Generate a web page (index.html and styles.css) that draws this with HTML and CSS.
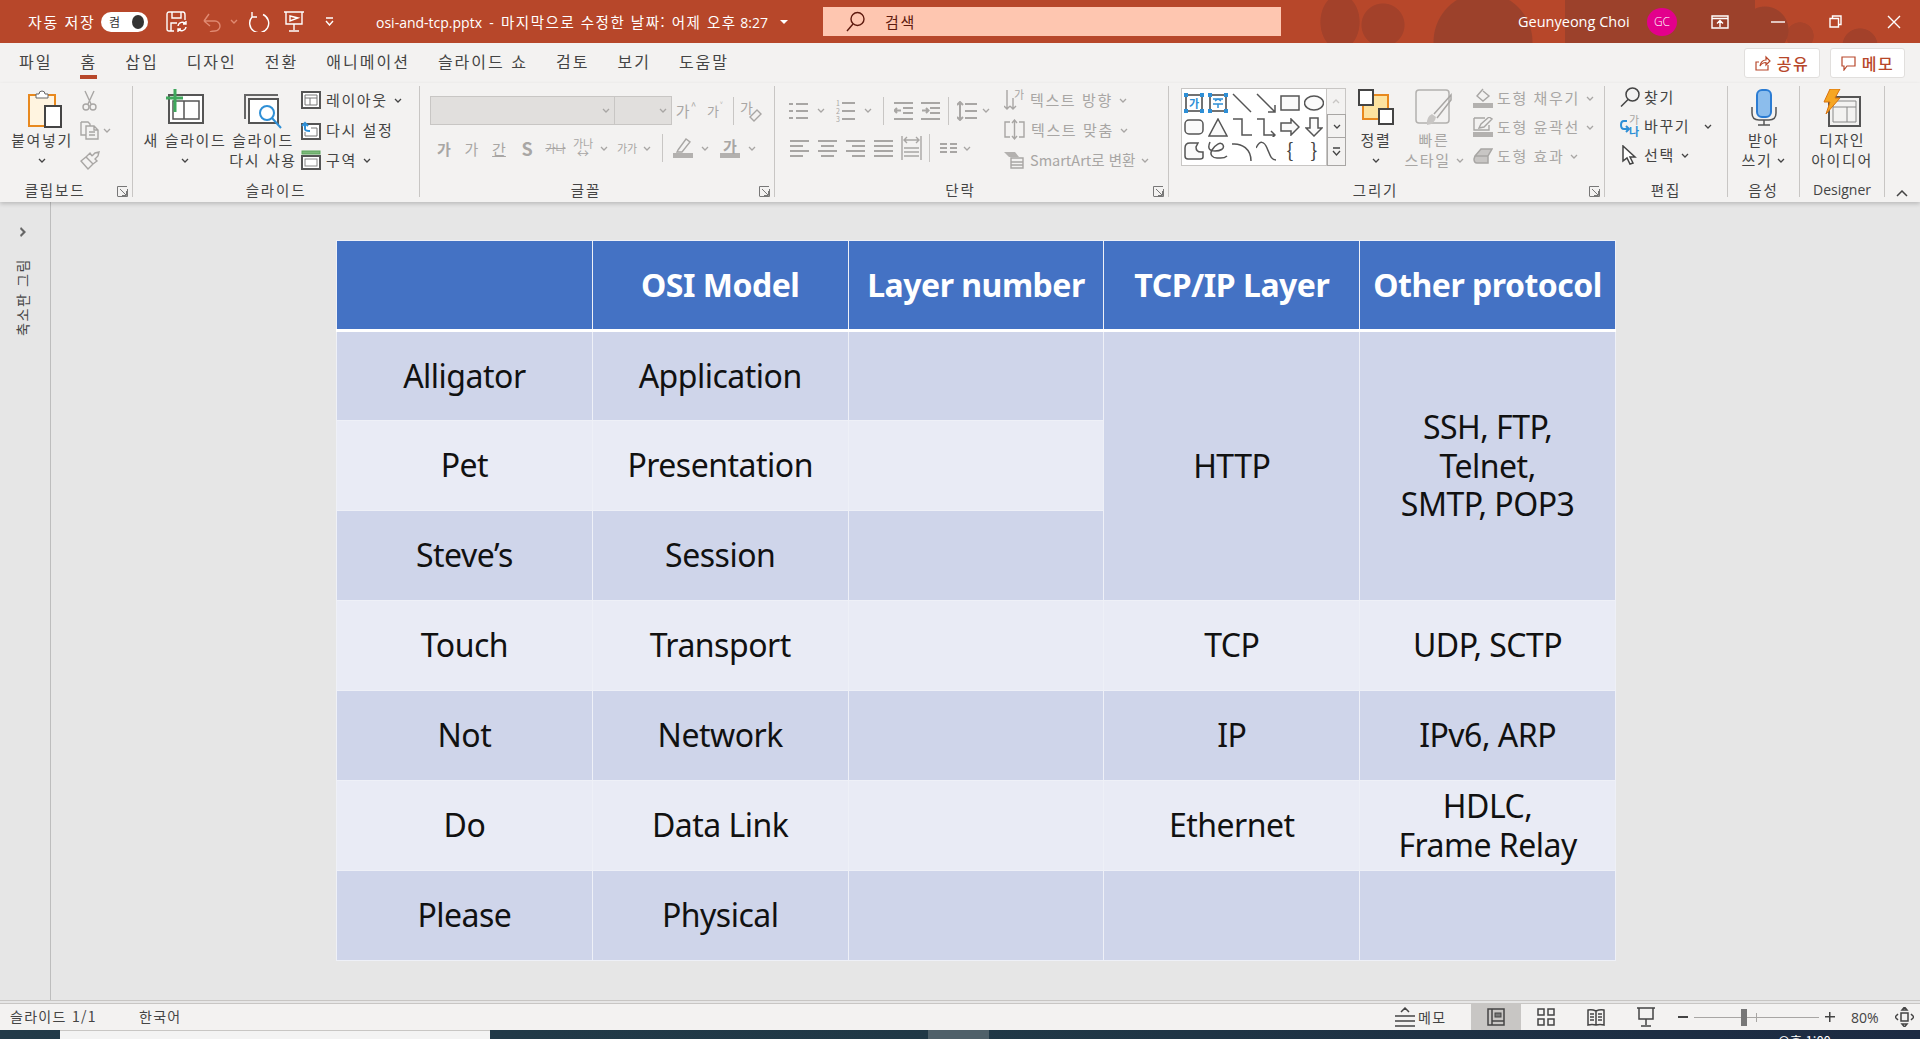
FILE: index.html
```html
<!DOCTYPE html>
<html lang="ko">
<head>
<meta charset="utf-8">
<title>osi-and-tcp.pptx</title>
<link rel="stylesheet" href="styles.css">
</head>
<body>
<header class="titlebar">
  <span class="autosave">자동 저장</span>
  <span class="toggle"><span>켬</span><i></i></span>
  <svg class="qa save" width="22" height="21" viewBox="0 0 22 21"><path class="w" d="M1 3.500Q1 1 3 1H17Q19 1 19 4V9M8 20H3Q1 20 1 18V3.500M6 1V7H15V1M5 20V12H11"/><path class="w" d="M12 15a4.500 4.500 0 0 1 8-2M20 16a4.500 4.500 0 0 1-8 2M20 10V13H17M12 21V18H15"/></svg>
  <svg class="qa undo" width="19" height="20" viewBox="0 0 19 20"><path class="f" d="M1 9 6 2M1 9H12A5 5 0 0 1 12 19Q9 19 7 20M1 9 7 14"/></svg>
  <svg class="qa uchev" width="8" height="5" viewBox="0 0 8 5"><path class="f" d="M1 1 4 4 7 1"/></svg>
  <svg class="qa redo" width="22" height="21" viewBox="0 0 22 21"><path class="w" d="M4 1V6H9M4 6A9.500 9.500 0 1 0 15 3.500"/></svg>
  <svg class="qa show" width="20" height="21" viewBox="0 0 20 21"><path class="w" d="M0 1H20M2 1V13H18V1M10 13V19M5 20H15M6 5 14 7 6 10Z"/></svg>
  <svg class="qa cust" width="9" height="9" viewBox="0 0 9 9"><path class="w" d="M1 1H8M1 4 4.500 8 8 4"/></svg>
  <span class="docname">osi-and-tcp.pptx&nbsp; -&nbsp; <span class="ko">마지막으로 수정한 날짜: 어제 오후</span> 8:27</span>
  <span class="caret"></span>
  <div class="searchbox">
    <svg width="19" height="21" viewBox="0 0 19 21"><circle class="dk" cx="11.500" cy="8" r="6.500"/><path class="dk" d="M7 13 1 20"/></svg>
    <span>검색</span>
  </div>
  <span class="username">Geunyeong Choi</span>
  <span class="avatar">GC</span>
  <svg class="win display" width="18" height="14" viewBox="0 0 18 14"><path class="w" d="M1 1H17V13H1ZM1 3.500H17M9 12V6M6 8.500 9 5.500 12 8.500"/></svg>
  <svg class="win minimize" width="14" height="2" viewBox="0 0 14 2"><path class="w" d="M0 1H14"/></svg>
  <svg class="win restore" width="13" height="13" viewBox="0 0 13 13"><path class="w" d="M1 3.500H9.500V12H1ZM3.500 3.500V1H12V9.500H9.500"/></svg>
  <svg class="win close" width="14" height="14" viewBox="0 0 14 14"><path class="w" d="M1 1 13 13M13 1 1 13"/></svg>
</header>

<nav class="tabs">
  <span class="tab">파일</span>
  <span class="tab active">홈</span>
  <span class="tab">삽입</span>
  <span class="tab">디자인</span>
  <span class="tab">전환</span>
  <span class="tab">애니메이션</span>
  <span class="tab">슬라이드 쇼</span>
  <span class="tab">검토</span>
  <span class="tab">보기</span>
  <span class="tab">도움말</span>
  <span class="tab-actions">
    <span class="pill share"><svg width="16" height="16" viewBox="0 0 16 16"><path class="r" d="M4 7H1V15H13V10M5 11Q6 5 11 5V2L15 6 11 10V7.500Q7 7.500 5 11Z"/></svg>공유</span>
    <span class="pill memo"><svg width="15" height="15" viewBox="0 0 15 15"><path class="r" d="M1 1H14V10H6L3 14V10H1Z"/></svg>메모</span>
  </span>
</nav>

<section class="ribbon">
  <div class="group g-clip">
    <div class="body">
      <div class="big b-paste">
        <div class="icon-slot">
          <svg width="34" height="38" viewBox="0 0 34 38"><rect x="1" y="5" width="26" height="31" fill="#fff4e0" stroke="#e8891f" stroke-width="2"/><path fill="#fff" stroke="#666" d="M8 8V4H11Q11 1 14 1T17 4H20V8Z"/><rect x="17" y="16" width="16" height="21" fill="#fff" stroke="#444" stroke-width="2"/></svg>
        </div>
        <span class="lbl">붙여넣기</span>
        <span class="lbl"><svg class="chev" width="8" height="5" viewBox="0 0 8 5"><path d="M1 1 4 4 7 1"/></svg></span>
      </div>
      <div class="rows minis dis">
        <div class="row"><svg width="15" height="21" viewBox="0 0 15 21"><path class="s" d="M3 1 9 14M12 1 6 14"/><circle class="s" cx="4" cy="17" r="3"/><circle class="s" cx="11" cy="17" r="3"/></svg></div>
        <div class="row"><svg width="20" height="19" viewBox="0 0 20 19"><path class="s" d="M1 1H8L10 3V5M6 14H1V1M6 5H14L18 9V18H6ZM14 5V9H18M9 11H15M9 14H15"/></svg><svg class="chev" width="8" height="5" viewBox="0 0 8 5"><path d="M1 1 4 4 7 1"/></svg></div>
        <div class="row"><svg width="20" height="19" viewBox="0 0 20 19"><path class="s" d="M1 10 8 18 13 13 6 6ZM6 6 10 2 12 5M12 5 15 2 19 1 18 5 15 8 17 10 13 13"/></svg></div>
      </div>
    </div>
    <div class="foot"><span class="glabel">클립보드</span><svg class="launch" width="11" height="11" viewBox="0 0 11 11"><path d="M.500 10V.500H10M3 3 9 9M5 9.500H9.500V5M.500 10.500H10.500V3"/></svg></div>
  </div>

  <div class="group g-slides">
    <div class="body">
      <div class="big b-new">
        <div class="icon-slot">
          <svg width="38" height="35" viewBox="0 0 38 35"><rect x="3" y="6" width="34" height="28" fill="#fff" stroke="#555" stroke-width="2"/><path fill="none" stroke="#555" stroke-width="1.500" d="M7 12H33V30H7ZM18 12V30"/><path fill="none" stroke="#3fa85d" stroke-width="3" d="M0 9H17M9 0V23"/></svg>
        </div>
        <span class="lbl">새 슬라이드</span>
        <span class="lbl"><svg class="chev" width="8" height="5" viewBox="0 0 8 5"><path d="M1 1 4 4 7 1"/></svg></span>
      </div>
      <div class="big b-reuse">
        <div class="icon-slot low">
          <svg width="38" height="35" viewBox="0 0 38 35"><path fill="none" stroke="#666" stroke-width="2" d="M1 25V1H34"/><rect x="5" y="5" width="29" height="24" fill="#fff" stroke="#555" stroke-width="2"/><circle cx="23" cy="19" r="7" fill="#fff" stroke="#2e8fd6" stroke-width="2"/><path stroke="#2e8fd6" stroke-width="2" d="M28 24 37 34"/></svg>
        </div>
        <span class="lbl">슬라이드</span>
        <span class="lbl">다시 사용</span>
      </div>
      <div class="rows slide-tools">
        <div class="row"><svg width="20" height="18" viewBox="0 0 20 18"><rect x="1" y="1" width="18" height="16" fill="#fff" stroke="#555" stroke-width="2"/><path fill="none" stroke="#777" d="M4 4H16V14H4ZM4 7H16M9 7V14"/></svg><span class="txt">레이아웃</span><svg class="chev" width="8" height="5" viewBox="0 0 8 5"><path d="M1 1 4 4 7 1"/></svg></div>
        <div class="row"><svg width="20" height="19" viewBox="0 0 20 19"><rect x="1" y="3" width="18" height="15" fill="#fff" stroke="#555" stroke-width="2"/><path fill="none" stroke="#777" d="M10 7H16V15H4V11"/><path fill="none" stroke="#2e8fd6" stroke-width="2" d="M1 5 4 2 7 5M4 2V8Q4 10 9 10"/></svg><span class="txt">다시 설정</span></div>
        <div class="row"><svg width="20" height="20" viewBox="0 0 20 20"><rect x="1" y="1" width="18" height="3" fill="#7cb87a" stroke="#5aa45a"/><rect x="1" y="6" width="18" height="13" fill="#fff" stroke="#555" stroke-width="2"/><rect x="4" y="9" width="12" height="7" fill="none" stroke="#888"/></svg><span class="txt">구역</span><svg class="chev" width="8" height="5" viewBox="0 0 8 5"><path d="M1 1 4 4 7 1"/></svg></div>
      </div>
    </div>
    <div class="foot"><span class="glabel">슬라이드</span></div>
  </div>

  <div class="group g-font">
    <div class="body stack">
      <div class="font-top">
        <span class="combo c-name"><svg class="chev" width="8" height="5" viewBox="0 0 8 5"><path d="M1 1 4 4 7 1"/></svg></span>
        <span class="combo c-size"><svg class="chev" width="8" height="5" viewBox="0 0 8 5"><path d="M1 1 4 4 7 1"/></svg></span>
        <div class="font-top-tools dis">
          <span class="gl sup">가<b>^</b></span>
          <span class="gl sup small">가<b>˅</b></span>
          <i class="sep"></i>
          <svg width="22" height="24" viewBox="0 0 22 24"><text x="0" y="14" class="svgt">가</text><path class="s" d="M10 18 17 11 21 15 14 22Z"/></svg>
        </div>
      </div>
      <div class="font-bottom dis">
        <b class="gl">가</b>
        <i class="gl">가</i>
        <u class="gl">간</u>
        <b class="gl ess">S</b>
        <s class="gl x-small">가나</s>
        <span class="gl spread">가나<em>↔</em></span>
        <svg class="chev" width="8" height="5" viewBox="0 0 8 5"><path d="M1 1 4 4 7 1"/></svg>
        <span class="gl x-small">가가</span>
        <svg class="chev" width="8" height="5" viewBox="0 0 8 5"><path d="M1 1 4 4 7 1"/></svg>
        <i class="sep"></i>
        <svg width="20" height="20" viewBox="0 0 20 20"><path class="s" d="M5 12 13 1 17 4 9 14 4 14Z"/><rect y="15" width="20" height="5" fill="#b3b1af"/></svg>
        <svg class="chev" width="8" height="5" viewBox="0 0 8 5"><path d="M1 1 4 4 7 1"/></svg>
        <span class="gl fcolor">가</span>
        <svg class="chev" width="8" height="5" viewBox="0 0 8 5"><path d="M1 1 4 4 7 1"/></svg>
      </div>
    </div>
    <div class="foot"><span class="glabel">글꼴</span><svg class="launch" width="11" height="11" viewBox="0 0 11 11"><path d="M.500 10V.500H10M3 3 9 9M5 9.500H9.500V5M.500 10.500H10.500V3"/></svg></div>
  </div>

  <div class="group g-para">
    <div class="body">
      <div class="stack para-left dis">
        <div class="para-top">
          <svg width="19" height="20" viewBox="0 0 19 20"><path class="b" d="M0 3H4M7 3H19M0 10H4M7 10H19M0 17H4M7 17H19"/></svg>
          <svg class="chev" width="8" height="5" viewBox="0 0 8 5"><path d="M1 1 4 4 7 1"/></svg>
          <svg width="19" height="22" viewBox="0 0 19 22"><path class="b" d="M6 3H19M6 11H19M6 19H19"/><text x="0" y="6" class="svgn">1</text><text x="0" y="14" class="svgn">2</text><text x="0" y="22" class="svgn">3</text></svg>
          <svg class="chev" width="8" height="5" viewBox="0 0 8 5"><path d="M1 1 4 4 7 1"/></svg>
          <i class="sep"></i>
          <svg width="19" height="20" viewBox="0 0 19 20"><path class="b" d="M0 2H19M9 7H19M9 12H19M0 18H19M7 9.500H1M3 7 .500 9.500 3 12"/></svg>
          <svg width="19" height="20" viewBox="0 0 19 20"><path class="b" d="M0 2H19M9 7H19M9 12H19M0 18H19M1 9.500H7M5 7 7.500 9.500 5 12"/></svg>
          <i class="sep"></i>
          <svg class="end" width="20" height="20" viewBox="0 0 20 20"><path class="b" d="M8 3H20M8 10H20M8 17H20M3 1V19M0 4 3 1 6 4M0 16 3 19 6 16"/></svg>
          <svg class="chev" width="8" height="5" viewBox="0 0 8 5"><path d="M1 1 4 4 7 1"/></svg>
        </div>
        <div class="para-bottom">
          <svg class="start" width="19" height="18" viewBox="0 0 19 18"><path class="b" d="M0 2H19M0 7H13M0 12H19M0 17H13"/></svg>
          <svg class="start" width="19" height="18" viewBox="0 0 19 18"><path class="b" d="M0 2H19M3 7H16M0 12H19M3 17H16"/></svg>
          <svg class="start" width="19" height="18" viewBox="0 0 19 18"><path class="b" d="M0 2H19M6 7H19M0 12H19M6 17H19"/></svg>
          <svg class="start" width="19" height="18" viewBox="0 0 19 18"><path class="b" d="M0 2H19M0 7H19M0 12H19M0 17H19"/></svg>
          <svg class="start" width="21" height="24" viewBox="0 0 21 24"><path class="s" d="M1 0V24M20 0V24M3 12H18M3 4H18M6 1 3 4 6 7M15 1 18 4 15 7M3 16H18M3 20H18"/></svg>
          <i class="sep"></i>
          <svg width="17" height="10" viewBox="0 0 17 10"><path class="b" d="M0 1H7M10 1H17M0 5H7M10 5H17M0 9H7M10 9H17"/></svg>
          <svg class="chev" width="8" height="5" viewBox="0 0 8 5"><path d="M1 1 4 4 7 1"/></svg>
        </div>
      </div>
      <div class="rows para-right dis">
        <div class="row"><svg width="20" height="22" viewBox="0 0 20 22"><path class="s" d="M3 1V20M0 17 3 20 6 17M9 9V20M6 17 9 20 12 17"/><text x="10" y="10" class="svgt sm">가</text></svg><span class="txt">텍스트 방향</span><svg class="chev" width="8" height="5" viewBox="0 0 8 5"><path d="M1 1 4 4 7 1"/></svg></div>
        <div class="row"><svg width="21" height="22" viewBox="0 0 21 22"><path class="s" d="M6 3H1V18H6M15 3H20V18H15M10.500 1V20M8 4 10.500 1 13 4M8 17 10.500 20 13 17"/></svg><span class="txt">텍스트 맞춤</span><svg class="chev" width="8" height="5" viewBox="0 0 8 5"><path d="M1 1 4 4 7 1"/></svg></div>
        <div class="row"><svg width="20" height="18" viewBox="0 0 20 18"><path fill="#b3b1af" d="M0 1H11L15 6H5Z"/><path class="s" d="M7 7H19V17H7ZM7 11H19M7 14H19"/></svg><span class="txt narrow">SmartArt로 변환</span><svg class="chev" width="8" height="5" viewBox="0 0 8 5"><path d="M1 1 4 4 7 1"/></svg></div>
      </div>
    </div>
    <div class="foot"><span class="glabel">단락</span><svg class="launch" width="11" height="11" viewBox="0 0 11 11"><path d="M.500 10V.500H10M3 3 9 9M5 9.500H9.500V5M.500 10.500H10.500V3"/></svg></div>
  </div>

  <div class="group g-draw">
    <div class="body">
      <div class="gallery">
        <div class="shapes">
          <svg class="shape" width="20" height="20" viewBox="0 0 20 20"><rect x="2" y="2" width="16" height="16" fill="#fff" stroke="#444" stroke-width="1.500"/><text x="5" y="15" class="svgt blue">가</text><path fill="#2e8fd6" d="M0 0h4v4H0zM16 0h4v4h-4zM0 16h4v4H0zM16 16h4v4h-4z"/></svg>
          <svg class="shape" width="20" height="20" viewBox="0 0 20 20"><rect x="2" y="2" width="16" height="16" fill="#fff" stroke="#444" stroke-width="1.500"/><path fill="none" stroke="#2e8fd6" stroke-width="1.500" d="M5 6H15M5 11H15M10 11V15M7 8 10 6 13 8"/><path fill="#2e8fd6" d="M0 0h4v4H0zM16 0h4v4h-4zM0 16h4v4H0zM16 16h4v4h-4z"/></svg>
          <svg class="shape" width="20" height="20" viewBox="0 0 20 20"><path class="g" d="M1 1 19 19"/></svg>
          <svg class="shape" width="20" height="20" viewBox="0 0 20 20"><path class="g" d="M1 1 19 19M12 19H19V12"/></svg>
          <svg class="shape" width="20" height="16" viewBox="0 0 20 16"><rect class="g" x="1" y="1" width="18" height="14"/></svg>
          <svg class="shape" width="20" height="16" viewBox="0 0 20 16"><ellipse class="g" cx="10" cy="8" rx="9.500" ry="7"/></svg>
          <svg class="shape" width="20" height="16" viewBox="0 0 20 16"><rect class="g" x="1" y="1" width="18" height="14" rx="4"/></svg>
          <svg class="shape" width="20" height="19" viewBox="0 0 20 19"><path class="g" d="M10 1 19 18H1Z"/></svg>
          <svg class="shape" width="20" height="19" viewBox="0 0 20 19"><path class="line" d="M1 1H10V17H20"/></svg>
          <svg class="shape" width="20" height="19" viewBox="0 0 20 19"><path class="line" d="M1 1H8V17H19M15 13 19 17 15 21"/></svg>
          <svg class="shape" width="20" height="18" viewBox="0 0 20 18"><path class="g" d="M1 5H11V1L19 9 11 17V13H1Z"/></svg>
          <svg class="shape" width="18" height="20" viewBox="0 0 18 20"><path class="g" d="M5 1H13V11H17L9 19 1 11H5Z"/></svg>
          <svg class="shape" width="20" height="18" viewBox="0 0 20 18"><path class="g" d="M4 17Q1 17 1 14V6Q1 1 6 1H14L12 5Q12 10 17 10H19V15Q19 17 16 17Z"/></svg>
          <svg class="shape" width="20" height="20" viewBox="0 0 20 20"><path class="line" d="M2 1C-1 8 2 10 7 10S17 8 15 4 7 4 4 9 5 17 9 17 16 18 19 15"/></svg>
          <svg class="shape" width="20" height="20" viewBox="0 0 20 20"><path class="line" d="M0 3C10 2 19 8 19 20"/></svg>
          <svg class="shape" width="20" height="20" viewBox="0 0 20 20"><path class="line" d="M0 7C4 -1 8 0 11 7S15 19 20 19"/></svg>
          <span class="brace">{</span>
          <span class="brace">}</span>
        </div>
        <div class="scroller">
          <span class="up"><svg width="8" height="5" viewBox="0 0 8 5"><path class="dim" d="M1 4 4 1 7 4"/></svg></span>
          <span class="down"><svg width="8" height="5" viewBox="0 0 8 5"><path class="dk2" d="M1 1 4 4 7 1"/></svg></span>
          <span class="more"><svg width="9" height="9" viewBox="0 0 9 9"><path class="dk2" d="M1 1H8M1 4 4.500 8 8 4"/></svg></span>
        </div>
      </div>
      <div class="big b-arrange">
        <div class="icon-slot">
          <svg width="36" height="36" viewBox="0 0 36 36"><rect x="5" y="6" width="25" height="24" fill="#fde3a0" stroke="#e8891f" stroke-width="2"/><rect x="1" y="1" width="14" height="15" fill="#fff" stroke="#444" stroke-width="2"/><rect x="21" y="20" width="14" height="15" fill="#fff" stroke="#444" stroke-width="2"/></svg>
        </div>
        <span class="lbl">정렬</span>
        <span class="lbl"><svg class="chev" width="8" height="5" viewBox="0 0 8 5"><path d="M1 1 4 4 7 1"/></svg></span>
      </div>
      <div class="big b-quick dis">
        <div class="icon-slot">
          <svg width="38" height="38" viewBox="0 0 38 38"><rect x="1" y="1" width="33" height="33" rx="3" fill="#f3f2f1" stroke="#b3b1af" stroke-width="1.500"/><path fill="#c8c6c4" d="M12 36Q11 28 17 25L21 28Q20 35 12 36Z"/><path fill="none" stroke="#a8a6a4" stroke-width="1.500" d="M19 25 36 6 36 11 22 29"/></svg>
        </div>
        <span class="lbl">빠른</span>
        <span class="lbl">스타일<svg class="chev" width="8" height="5" viewBox="0 0 8 5"><path d="M1 1 4 4 7 1"/></svg></span>
      </div>
      <div class="rows shape-tools dis">
        <div class="row"><svg width="20" height="20" viewBox="0 0 20 20"><path class="s" d="M10 1 4 8 10 13 16 8 10 3"/><path fill="#b3b1af" d="M0 15H20V20H0Z"/></svg><span class="txt">도형 채우기</span><svg class="chev" width="8" height="5" viewBox="0 0 8 5"><path d="M1 1 4 4 7 1"/></svg></div>
        <div class="row"><svg width="20" height="20" viewBox="0 0 20 20"><path class="s" d="M1 1H12M1 1V13H16V8M6 11 8 7 16 0 19 2 11 10Z"/><path fill="#b3b1af" d="M0 15H20V20H0Z"/></svg><span class="txt">도형 윤곽선</span><svg class="chev" width="8" height="5" viewBox="0 0 8 5"><path d="M1 1 4 4 7 1"/></svg></div>
        <div class="row"><svg width="20" height="18" viewBox="0 0 20 18"><path fill="#c8c6c4" stroke="#a8a6a4" stroke-width="1.500" d="M2 9 8 2H19L15 9V16H4Q1 16 1 12ZM2 9H15"/></svg><span class="txt">도형 효과</span><svg class="chev" width="8" height="5" viewBox="0 0 8 5"><path d="M1 1 4 4 7 1"/></svg></div>
      </div>
    </div>
    <div class="foot"><span class="glabel">그리기</span><svg class="launch" width="11" height="11" viewBox="0 0 11 11"><path d="M.500 10V.500H10M3 3 9 9M5 9.500H9.500V5M.500 10.500H10.500V3"/></svg></div>
  </div>

  <div class="group g-edit">
    <div class="body">
      <div class="rows edit-tools">
        <div class="row"><svg width="20" height="20" viewBox="0 0 20 20"><circle class="g" cx="12.500" cy="7.500" r="6.500"/><path class="g" d="M8 12.500 1 19.500"/></svg><span class="txt">찾기</span></div>
        <div class="row"><svg width="20" height="22" viewBox="0 0 20 22"><path fill="none" stroke="#2e8fd6" stroke-width="2" d="M7 6H4Q1 6 1 10T4 14H8M6 11 9 14 6 17"/><text x="9" y="9" class="svgt sm">가</text><text x="9" y="21" class="svgt sm blue">나</text></svg><span class="txt">바꾸기</span><svg class="chev far" width="8" height="5" viewBox="0 0 8 5"><path d="M1 1 4 4 7 1"/></svg></div>
        <div class="row"><svg width="20" height="20" viewBox="0 0 20 20"><path fill="#fff" stroke="#444" stroke-width="1.500" d="M3 1V16L7 13 10 19 13 18 10 12H15Z"/></svg><span class="txt">선택</span><svg class="chev" width="8" height="5" viewBox="0 0 8 5"><path d="M1 1 4 4 7 1"/></svg></div>
      </div>
    </div>
    <div class="foot"><span class="glabel">편집</span></div>
  </div>

  <div class="group g-voice">
    <div class="body">
      <div class="big b-mic">
        <div class="icon-slot">
          <svg width="26" height="37" viewBox="0 0 26 37"><rect x="6" y="1" width="14" height="27" rx="5" fill="#8cbdec" stroke="#2b7cd3" stroke-width="2"/><path fill="none" stroke="#555" stroke-width="1.500" d="M1 18V24Q1 31 8 31H18Q25 31 25 24V18M13 31V36M7 36H19"/></svg>
        </div>
        <span class="lbl">받아</span>
        <span class="lbl">쓰기<svg class="chev" width="8" height="5" viewBox="0 0 8 5"><path d="M1 1 4 4 7 1"/></svg></span>
      </div>
    </div>
    <div class="foot"><span class="glabel">음성</span></div>
  </div>

  <div class="group g-design">
    <div class="body">
      <div class="big b-design">
        <div class="icon-slot">
          <svg width="38" height="38" viewBox="0 0 38 38"><rect x="6" y="8" width="31" height="29" fill="#f3f2f1" stroke="#555" stroke-width="2"/><path fill="none" stroke="#888" d="M10 12H33V33H10ZM10 18H33M24 18V33"/><path fill="#f6a623" stroke="#d9730d" d="M7 0H17L12 9H17L3 25 7 13H1Z"/></svg>
        </div>
        <span class="lbl">디자인</span>
        <span class="lbl">아이디어</span>
      </div>
    </div>
    <div class="foot"><span class="glabel latin">Designer</span></div>
  </div>

  <svg class="collapse" width="12" height="7" viewBox="0 0 12 7"><path d="M1 6 6 1 11 6"/></svg>
</section>

<main class="workspace">
  <aside class="thumbs">
    <svg width="7" height="10" viewBox="0 0 7 10"><path d="M1 0 6 5 1 10 0 8 3 5 0 2Z"/></svg>
    <span class="thumbs-title">축소판 그림</span>
  </aside>
  <div class="stage">
    <table class="slide-table">
      <thead>
        <tr><th></th><th>OSI Model</th><th>Layer number</th><th>TCP/IP Layer</th><th>Other protocol</th></tr>
      </thead>
      <tbody>
        <tr class="odd"><td>Alligator</td><td>Application</td><td></td><td class="merged" rowspan="3">HTTP</td><td class="merged" rowspan="3">SSH, FTP,<br>Telnet,<br>SMTP, POP3</td></tr>
        <tr class="even"><td>Pet</td><td>Presentation</td><td></td></tr>
        <tr class="odd"><td>Steve’s</td><td>Session</td><td></td></tr>
        <tr class="even"><td>Touch</td><td>Transport</td><td></td><td>TCP</td><td>UDP, SCTP</td></tr>
        <tr class="odd"><td>Not</td><td>Network</td><td></td><td>IP</td><td>IPv6, ARP</td></tr>
        <tr class="even"><td>Do</td><td>Data Link</td><td></td><td>Ethernet</td><td>HDLC,<br>Frame Relay</td></tr>
        <tr class="odd"><td>Please</td><td>Physical</td><td></td><td></td><td></td></tr>
      </tbody>
    </table>
  </div>
</main>

<footer class="statusbar">
  <span class="st-slide">슬라이드 1/1</span>
  <span class="st-lang">한국어</span>
  <span class="st-notes"><svg width="20" height="20" viewBox="0 0 20 20"><path class="g" d="M6 5 10 1 14 5M0 9H20M0 14H20M0 19H20"/></svg>메모</span>
  <span class="view on"><svg width="18" height="18" viewBox="0 0 18 18"><path class="g" d="M1 1H17V17H1ZM5 1V17M5 13H17"/><rect x="8" y="5" width="6" height="4" fill="#777" stroke="#444"/></svg></span>
  <span class="view"><svg width="18" height="18" viewBox="0 0 18 18"><path class="g" d="M1 1H7V7H1ZM11 1H17V7H11ZM1 11H7V17H1ZM11 11H17V17H11Z"/></svg></span>
  <span class="view"><svg width="18" height="18" viewBox="0 0 18 18"><path class="g" d="M9 3Q5 1 1 2V17Q5 16 9 17 13 16 17 17V2Q13 1 9 3ZM9 3V17M3 6H7M3 9H7M3 12H7M11 6H15M11 9H15M11 12H15"/></svg></span>
  <span class="view"><svg width="18" height="20" viewBox="0 0 18 20"><path class="g" d="M0 1H18M2 1V12H16V1M9 12V18M4 19H14"/></svg></span>
  <span class="zoom-minus"></span>
  <span class="slider"><i class="tick"></i><i class="thumb"></i></span>
  <span class="zoom-plus"></span>
  <span class="st-zoom">80%</span>
  <svg class="fit" width="19" height="20" viewBox="0 0 19 20"><path class="g" d="M6 6H13V14H6ZM9.500 0 7 3H12ZM9.500 20 7 17H12ZM3 7 0 10 3 13M16 7 19 10 16 13"/></svg>
</footer>
<div class="taskbar"><span class="task-window"></span><span class="task-active"></span><span class="task-clock">오후 1:00</span></div>
</body>
</html>
```
FILE: styles.css
```css
*{box-sizing:border-box}
html,body{margin:0;padding:0}
body{width:1920px;height:1039px;overflow:hidden;display:flex;flex-direction:column;background:#e6e6e6;color:#444;font-family:"Noto Sans CJK KR","Noto Sans",sans-serif;font-size:15px;letter-spacing:1.6px}
svg{display:block;flex:none}

/* title bar */
.titlebar{height:43px;flex:none;display:flex;align-items:center;color:#fff;background-color:#b7472a;
 background-image:
  radial-gradient(ellipse 20px 28px at 1340px 22px,#a3412a 96%,transparent),
  radial-gradient(circle 22px at 1383px 25px,#a3412a 96%,transparent),
  radial-gradient(circle 50px at 1483px 42px,#9c412b 98%,transparent),
  radial-gradient(circle 18px at 1860px 46px,#a3412a 96%,transparent),
  radial-gradient(circle 24px at 1765px 30px,#9c412b 96%,transparent),
  radial-gradient(circle 14px at 1800px 36px,#a8432a 96%,transparent),
  linear-gradient(#9c412b,#9c412b);
 background-size:100% 100%,100% 100%,100% 100%,100% 100%,100% 100%,100% 100%,190px 100%;
 background-position:0 0,0 0,0 0,0 0,0 0,0 0,1565px 0;
 background-repeat:no-repeat}
.w{fill:none;stroke:#fff;stroke-width:1.4}
.f{fill:none;stroke:#e08a72;stroke-width:1.4}
.dk{fill:none;stroke:#5e1a0e;stroke-width:1.4}
.autosave{margin-left:28px;width:73px;white-space:nowrap}
.toggle{width:47px;height:20px;border-radius:10px;background:#fff;display:flex;align-items:center;justify-content:space-between;padding:0 4px 0 8px;color:#333;font-size:12px;letter-spacing:0}
.toggle i{width:12px;height:14px;border-radius:50%;background:#333}
.save{margin-left:18px}
.undo{margin-left:15px}
.uchev{margin-left:8px}
.redo{margin-left:10px}
.show{margin-left:14px}
.cust{margin-left:21px}
.docname{margin-left:42px;width:400px;white-space:nowrap;letter-spacing:0;font-family:"Open Sans","Noto Sans CJK KR",sans-serif;font-size:14px}
.docname .ko{letter-spacing:1.5px;font-family:"Noto Sans CJK KR",sans-serif;font-size:14.500px}
.caret{width:0;height:0;border:4px solid transparent;border-top:4px solid #fff;border-bottom:0;margin-left:4px}
.searchbox{margin-left:35px;width:458px;height:29px;background:#fec6b0;color:#5e1a0e;display:flex;align-items:center;padding-left:23px;gap:20px}
.username{margin-left:237px;width:129px;letter-spacing:0;font-family:"Open Sans",sans-serif;font-size:14.500px;white-space:nowrap}
.avatar{width:30px;height:28px;border-radius:50%;background:#e3008c;display:flex;align-items:center;justify-content:center;font-size:12px;letter-spacing:0;font-family:"Open Sans",sans-serif;font-weight:300}
.display{margin-left:34px}
.minimize{margin-left:42px}
.restore{margin-left:44px}
.close{margin-left:45px}

/* tabs */
.tabs{height:40px;flex:none;display:flex;align-items:center;background:#f3f2f1;padding-left:5px;font-size:16px;letter-spacing:2px}
.tab{padding:0 14px;height:40px;line-height:37px;position:relative;white-space:nowrap}
.tab.active::after{content:"";position:absolute;left:14px;right:14px;top:32px;height:4px;background:#b7472a}
.tab-actions{margin-left:auto;display:flex;gap:10px;padding-right:15px;letter-spacing:1.6px}
.pill{width:76px;height:30px;background:#fff;border:1px solid #e1dfdd;border-radius:3px;display:flex;align-items:center;justify-content:center;gap:6px;color:#b7472a;font-weight:500;font-size:16px}
.pill.memo{width:75px}
.r{fill:none;stroke:#b7472a;stroke-width:1.2}

/* ribbon */
.ribbon{height:119px;flex:none;display:flex;background:#f3f2f1;padding-top:3px;position:relative;box-shadow:0 2px 4px rgba(0,0,0,.18);z-index:1}
.group{height:111px;border-right:1px solid #c8c6c4;display:flex;flex-direction:column}
.body{height:98px;display:flex}
.stack{display:flex;flex-direction:column}
.foot{display:flex;align-items:center;height:14px;line-height:14px}
.glabel{flex:1;text-align:center;white-space:nowrap;font-size:14.500px;letter-spacing:1.8px}
.glabel.latin{letter-spacing:0;font-family:"Open Sans",sans-serif;font-size:14px}
.launch{margin:2px 4px 0 7px;fill:none;stroke:#777}
.g-clip{width:133px}
.g-slides{width:287px}
.g-font{width:355px}
.g-para{width:394px}
.g-draw{width:436px}
.g-edit{width:123px}
.g-voice{width:72px}
.g-design{width:85px}
.dis{color:#a8a6a4}
.s{fill:none;stroke:#a8a6a4;stroke-width:1.4}
.b{fill:none;stroke:#a8a6a4;stroke-width:2}
.g{fill:none;stroke:#444;stroke-width:1.500}
.chev{fill:none;stroke:currentColor;stroke-width:1.300}
.big{display:flex;flex-direction:column;align-items:center;line-height:20px;white-space:nowrap}
.icon-slot{height:44px;display:flex;align-items:flex-start;justify-content:center;padding-top:3px}
.icon-slot.low{padding-top:8px}
.lbl{display:flex;align-items:center;justify-content:center;gap:5px;height:20px}
.rows{display:flex;flex-direction:column;gap:2px}
.row{height:28px;display:flex;align-items:center;white-space:nowrap}
.txt{margin:0 0 2px 5px}
.row .chev{margin-left:6px}
.sep{display:block;width:1px;height:28px;background:#c8c6c4;justify-self:center}
.gl{font-style:normal;text-decoration-thickness:1px;justify-self:center;letter-spacing:0}
.svgt{font-size:14px;fill:#a8a6a4;font-family:"Noto Sans CJK KR",sans-serif;letter-spacing:0}
.svgt.sm{font-size:11px}
.svgt.sm.blue,.svgt.blue{fill:#2e8fd6;font-size:11px}
.svgt.blue{font-weight:700}
.svgn{font-size:7px;fill:#a8a6a4;letter-spacing:0}

.b-paste{width:68px;margin-left:8px}
.b-paste .icon-slot{padding:4px 0 0 6px}
.minis{margin-left:4px;width:40px}
.minis .row:nth-child(1){padding-left:2px}
.minis .row .chev{margin-left:3px}
.b-new{width:84px;margin-left:10px}
.b-reuse{width:68px;margin-left:2px}
.slide-tools{margin-left:4px}
.c-name,.c-size{display:flex;align-items:center;justify-content:flex-end;height:29px;background:#e1dfdd;border:1px solid #c8c6c4;color:#a8a6a4;padding-right:4px}
.c-name{width:185px}
.c-size{width:57px;border-left:0}
.font-top{display:flex;margin:10px 0 0 10px}
.font-top-tools{display:grid;grid-template-columns:28px 30px 6px 30px;justify-items:center;align-items:center}
.sup{font-size:15px;line-height:20px}
.sup b{font-weight:400;font-size:10px;line-height:1;vertical-align:top;margin-left:1px}
.sup.small{font-size:13px}
.font-bottom{display:grid;grid-template-columns:28px 27px 28px 28px 29px 26px 16px 30px 10px 21px 20px 24px 26px 18px;justify-items:center;align-items:center;margin:9px 0 0 10px;height:26px}
.ess{font-size:18px}
.x-small{font-size:11px;text-decoration:line-through}
.spread{font-size:11px;line-height:10px;display:flex;flex-direction:column;align-items:center}
.spread em{font-style:normal;font-size:12px;line-height:10px}
.font-bottom>span.x-small{text-decoration:none}
.fcolor{border-bottom:5px solid #b3b1af;line-height:15px;padding:0 3px;font-size:15px;font-weight:700}
.para-left{width:229px}
.para-top{display:grid;grid-template-columns:26px 12px 37px 8px 22px 19px 35px 1px 28px 18px;justify-items:center;align-items:center;height:29px;margin:10px 0 0 14px}
.para-top>svg:first-child{justify-self:start}
.end{justify-self:end}
.para-bottom{display:grid;grid-template-columns:28px 28px 28px 27px 20px 16px 23px 14px;justify-items:center;align-items:center;height:26px;margin:9px 0 0 15px}
.start{justify-self:start}
.para-right .txt{margin-left:6px}
.narrow{letter-spacing:0;font-size:14.500px}
.gallery{display:flex;margin:2px 0 0 12px;height:78px;width:165px}
.shapes{width:146px;display:grid;grid-template-columns:repeat(6,24px);grid-template-rows:repeat(3,24px);background:#fff;border:1px solid #c8c6c4;justify-items:center;align-items:center;padding:2px 0 0}
.shapes .g{fill:#fafafa;stroke:#555}
.line{fill:none;stroke:#555;stroke-width:1.500}
.brace{font-size:20px;color:#444;line-height:20px;letter-spacing:0}
.scroller{width:19px;display:flex;flex-direction:column}
.scroller span{display:flex;align-items:center;justify-content:center;border:1px solid #c8c6c4;border-left:0}
.scroller .up{height:26px;border-bottom:0}
.scroller .down{height:24px;background:#f3f2f1;border:1px solid #a8a6a4}
.scroller .more{height:28px;border:1px solid #a8a6a4;border-top:0}
.dim{fill:none;stroke:#c8c6c4;stroke-width:1.300}
.dk2{fill:none;stroke:#444;stroke-width:1.300}
.b-arrange{width:60px}
.b-quick{width:56px}
.shape-tools{margin:-2px 0 0 11px;gap:1px}
.shape-tools .txt{margin-left:4px}
.edit-tools{margin:-3px 0 0 15px;gap:1px}
.edit-tools .txt{margin-left:4px}
.row .far{margin-left:14px}
.b-mic{width:71px}
.b-design{width:84px}
.collapse{position:absolute;right:12px;top:107px;fill:none;stroke:#444;stroke-width:1.500}

/* workspace */
.workspace{flex:1;display:flex;background:#e6e6e6;border-bottom:1px solid #c8c6c4;min-height:0}
.thumbs{width:51px;flex:none;border-right:1px solid #bdbdbd;padding-top:25px;display:flex;flex-direction:column;align-items:flex-start}
.thumbs svg{fill:#666;margin-left:20px}
.thumbs-title{writing-mode:vertical-rl;text-orientation:sideways;transform:rotate(180deg);margin:21px 0 0 13px;font-size:14px;line-height:18px;white-space:nowrap}
.stage{flex:1;padding:38px 0 0 285px}
.slide-table{border-collapse:collapse;table-layout:fixed;width:1280px;font-family:"Noto Sans","Open Sans",sans-serif;color:#111;font-size:32px;line-height:38.400px;letter-spacing:-.5px;border-bottom:1px solid #f0f0f0}
.slide-table th,.slide-table td{height:90px;padding:0;text-align:center;vertical-align:middle;border:1px solid #eef0f7}
.slide-table th{background:#4472c4;color:#fff;font-weight:700;border-bottom:3px solid #fff}
.odd td,.merged{background:#cfd5ea}
.even td{background:#e9ebf5}
.odd td.merged{background:#cfd5ea}

/* status bar */
.statusbar{height:27px;flex:none;margin-top:2px;border-top:1px solid #c8c6c4;background:#f3f2f1;display:flex;align-items:center;font-size:14px;letter-spacing:1.3px;white-space:nowrap}
.st-slide{margin:0 0 2px 10px;width:129px}
.st-lang{width:1256px;margin-bottom:2px}
.st-notes{width:76px;display:flex;align-items:center;gap:3px;height:100%}
.view{width:50px;height:100%;display:flex;align-items:center;justify-content:center}
.view.on{background:#c8c6c4}
.zoom-minus{width:10px;height:1.500px;background:#444;margin-left:7px}
.slider{width:125px;height:1px;background:#a8a6a4;margin-left:6px;position:relative}
.thumb{position:absolute;left:47px;top:-8px;width:6px;height:17px;background:#777}
.tick{position:absolute;left:62px;top:-4px;width:1px;height:9px;background:#a8a6a4}
.zoom-plus{width:10px;height:10px;margin-left:6px;background:linear-gradient(#444,#444) center/100% 1.500px no-repeat,linear-gradient(#444,#444) center/1.500px 100% no-repeat}
.st-zoom{margin-left:16px;width:44px;letter-spacing:0;font-family:"Open Sans",sans-serif}
.taskbar{height:9px;flex:none;display:flex;background:linear-gradient(90deg,#223a48,#203846 50%,#1c2a42);overflow:hidden;position:relative}
.task-window{margin-left:60px;width:430px;background:#f3f3f3;border-top:1px solid #c8c6c4}
.task-active{margin-left:438px;width:61px;background:#4f6069}
.task-clock{position:absolute;left:1778px;top:0;color:#fff;font-size:13px;line-height:21px;letter-spacing:0}
```
